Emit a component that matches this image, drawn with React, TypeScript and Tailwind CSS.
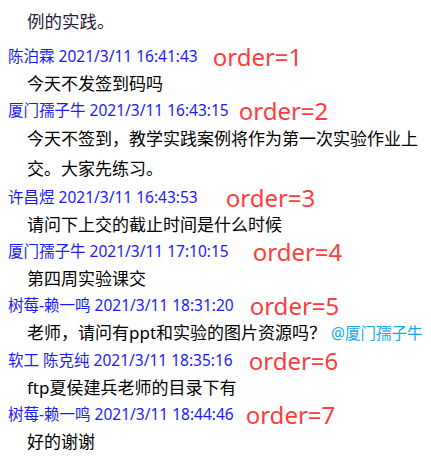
import React from 'react';

interface Message {
  id: number;
  sender: string;
  time: string;
  text: string;
  mention?: string;
  orderGap: string;
  bodyClass?: string;
}

const messages: Message[] = [
  { id: 1, sender: '陈泊霖', time: '2021/3/11 16:41:43', text: '今天不发签到码吗', orderGap: 'ml-[15px]' },
  {
    id: 2,
    sender: '厦门孺子牛',
    time: '2021/3/11 16:43:15',
    text: '今天不签到，教学实践案例将作为第一次实验作业上交。大家先练习。',
    orderGap: 'ml-[10px]',
    bodyClass: 'leading-[30px]',
  },
  { id: 3, sender: '许昌煜', time: '2021/3/11 16:43:53', text: '请问下上交的截止时间是什么时候', orderGap: 'ml-[28px]' },
  { id: 4, sender: '厦门孺子牛', time: '2021/3/11 17:10:15', text: '第四周实验课交', orderGap: 'ml-[24px]' },
  {
    id: 5,
    sender: '树莓-赖一鸣',
    time: '2021/3/11 18:31:20',
    text: '老师，请问有ppt和实验的图片资源吗？',
    mention: '@厦门孺子牛',
    orderGap: 'ml-[16px]',
    bodyClass: 'leading-[27px] whitespace-nowrap',
  },
  { id: 6, sender: '软工 陈克纯', time: '2021/3/11 18:35:16', text: 'ftp夏侯建兵老师的目录下有', orderGap: 'ml-[16px]' },
  { id: 7, sender: '树莓-赖一鸣', time: '2021/3/11 18:44:46', text: '好的谢谢', orderGap: 'ml-[12px]' },
];

const App: React.FC = () => {
  return (
    <div className="w-[431px] h-[470px] bg-white overflow-hidden font-['Noto_Sans','Noto_Sans_CJK_SC',sans-serif]">
      {/* tail of the previous message */}
      <p className="pt-[6px] pl-[27px] text-[17.5px] leading-[30px] text-[#2c1b3b]">例的实践。</p>

      <div className="mt-[7px]">
        {messages.map((msg) => (
          <div key={msg.id}>
            <div className="flex items-center h-[27px] pl-[8px] whitespace-nowrap">
              <span className="text-[15.5px] text-[#1a1aff]">
                {msg.sender} {msg.time}
              </span>
              <span className={`${msg.orderGap} text-[24px] text-[#ff3d3d]`}>order={msg.id}</span>
            </div>
            <p className={`pl-[27px] pr-[8px] text-[17px] text-black ${msg.bodyClass ?? 'leading-[27px]'}`}>
              {msg.text}
              {msg.mention && (
                <span className="ml-[5px] text-[15.5px] text-[#1aa7e8]">{msg.mention}</span>
              )}
            </p>
          </div>
        ))}
      </div>
    </div>
  );
};

export default App;
